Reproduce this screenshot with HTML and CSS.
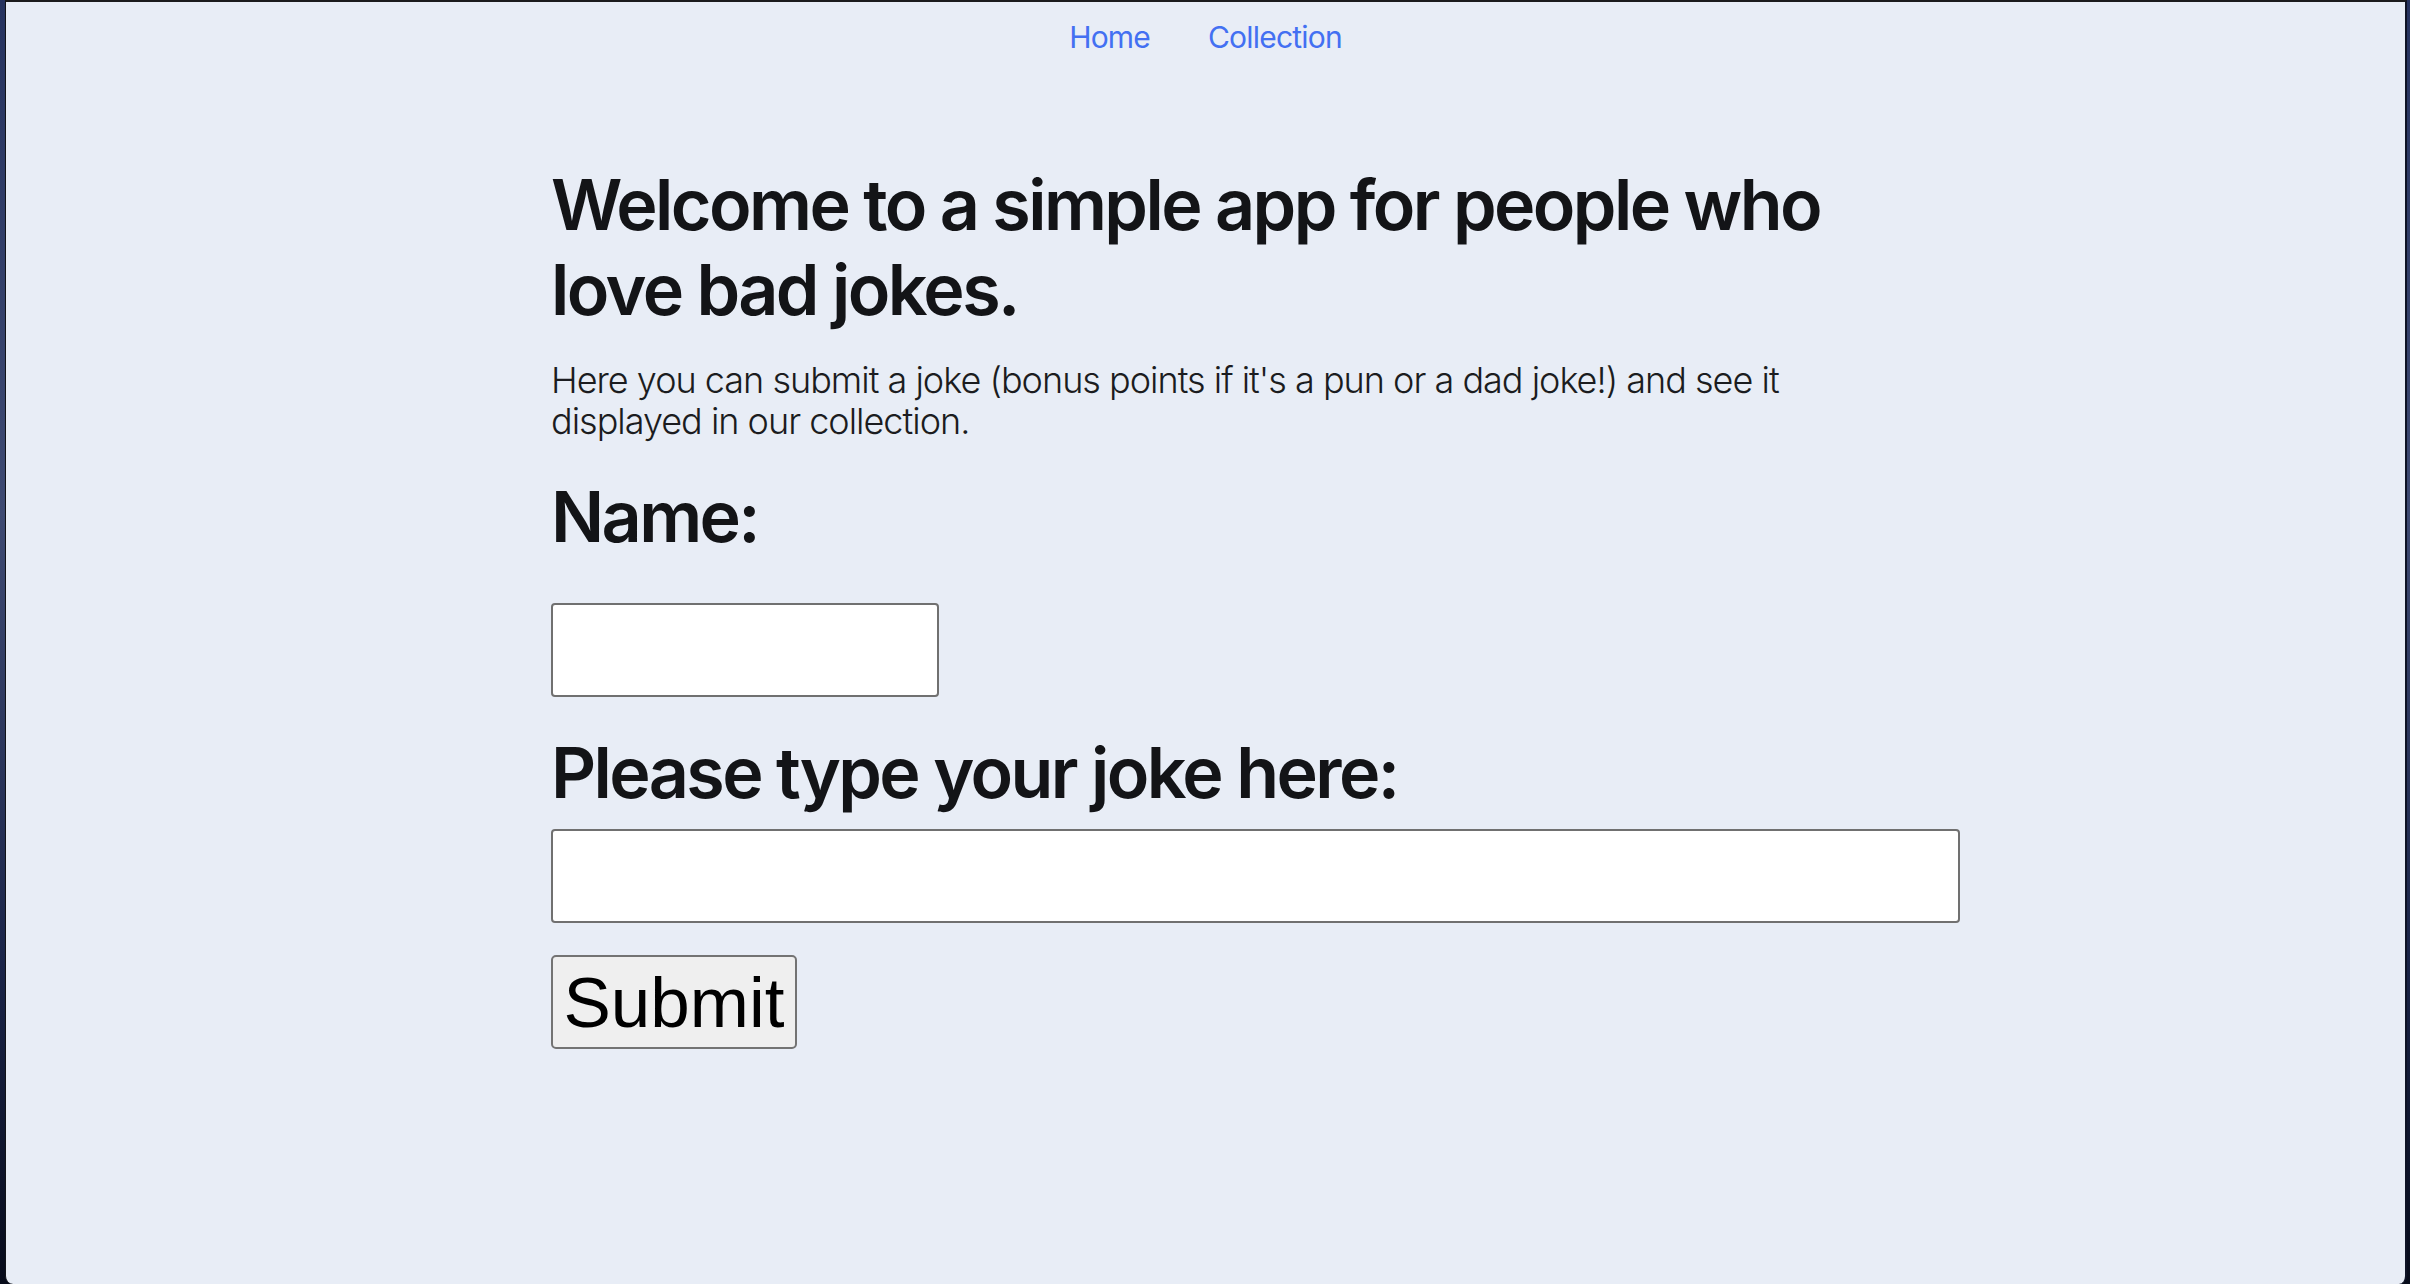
FILE: index.html
```html
<!DOCTYPE html>
<html lang="en">
<head>
<meta charset="utf-8">
<title>Bad Jokes</title>
<link rel="stylesheet" href="styles.css">
</head>
<body>
<div class="window">
  <nav class="nav">
    <a class="nav-link" href="#">Home</a>
    <a class="nav-link" href="#">Collection</a>
  </nav>
  <main class="main">
    <div class="intro">
      <h1 class="title">Welcome to a simple app for people who love bad jokes.</h1>
      <p class="lead">Here you can submit a joke (bonus points if it's a pun or a dad joke!) and see it displayed in our collection.</p>
    </div>
    <form class="form">
      <label class="field-label label-name" for="name">Name:</label>
      <input class="input input-name" id="name" type="text">
      <label class="field-label label-joke" for="joke">Please type your joke here:</label>
      <input class="input input-joke" id="joke" type="text">
      <button class="submit" type="button">Submit</button>
    </form>
  </main>
</div>
</body>
</html>
```
FILE: styles.css
```css
html, body {
  margin: 0;
  padding: 0;
  height: 1284px;
  overflow: hidden;
}
body {
  background: linear-gradient(180deg, #26335f 0%, #3e4a72 40%, #1a2448 75%, #070b1a 100%);
  font-family: Inter, "Noto Sans", sans-serif;
}
.window {
  box-sizing: border-box;
  height: 1284px;
  margin: 0 3px 0 5px;
  background: #e8edf6;
  border-top: 2px solid #1b1b1d;
  border-left: 1px solid #111318;
  border-right: 2px solid #0e1325;
  border-bottom-left-radius: 8px;
  border-bottom-right-radius: 8px;
}
.nav {
  display: flex;
  justify-content: center;
  padding-top: 13px;
}
.nav-link {
  font-size: 30px;
  line-height: 45px;
  font-weight: 400;
  color: #4370f2;
  text-decoration: none;
  padding: 0 29px;
  letter-spacing: -0.8px;
}
.main {
  margin-left: 545px;
  width: 1409px;
  padding-top: 102px;
}
.intro {
  max-width: 1320px;
}
.title {
  margin: 0 0 28px;
  font-size: 70px;
  line-height: 85px;
  font-weight: 600;
  color: #131417;
  letter-spacing: -2.6px;
}
.lead {
  margin: 0 0 32px;
  font-size: 36px;
  line-height: 41px;
  font-weight: 300;
  color: #1b1c20;
  letter-spacing: -1px;
}
.form {
  display: flex;
  flex-direction: column;
  align-items: flex-start;
}
.field-label {
  display: block;
  font-size: 70px;
  line-height: 85px;
  font-weight: 600;
  color: #131417;
  letter-spacing: -2.6px;
}
.label-name {
  margin-bottom: 44px;
}
.label-joke {
  margin-top: 33px;
  margin-bottom: 14px;
}
.input {
  box-sizing: border-box;
  height: 94px;
  margin: 0;
  background: #ffffff;
  border: 2px solid #707070;
  border-radius: 4px;
  font-size: 36px;
  padding: 0 8px;
}
.input-name {
  width: 388px;
}
.input-joke {
  width: 1409px;
}
.submit {
  box-sizing: border-box;
  margin-top: 32px;
  width: 246px;
  height: 94px;
  padding: 0;
  background: #efefef;
  border: 2px solid #737373;
  border-radius: 5px;
  font-family: "Liberation Sans", Arial, sans-serif;
  font-size: 71px;
  line-height: 1;
  color: #000000;
  text-align: center;
}
```
